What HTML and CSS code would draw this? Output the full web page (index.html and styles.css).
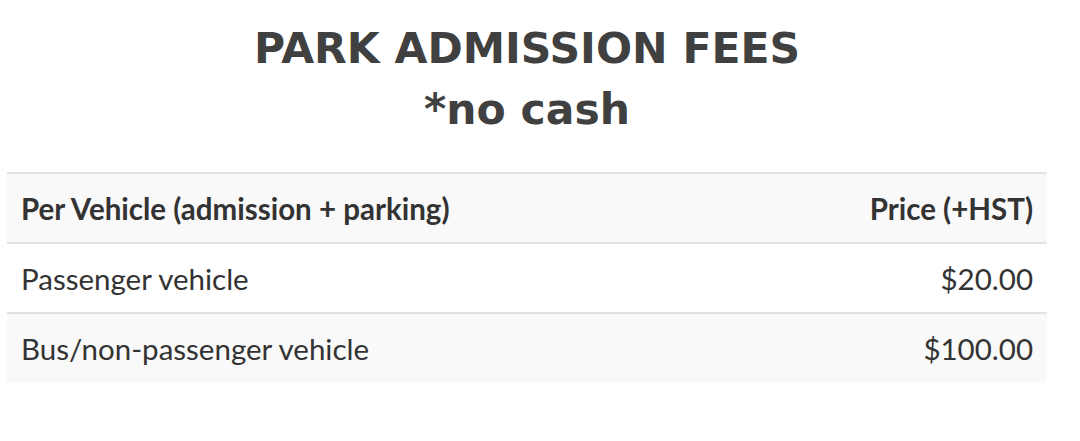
FILE: index.html
```html
<!DOCTYPE html>
<html>
<head>
<meta charset="utf-8">
<link rel="stylesheet" href="styles.css">
</head>
<body>
<div class="page">
  <h2 class="title">PARK ADMISSION FEES<br>*no cash</h2>
  <table class="fees">
    <thead>
      <tr><th>Per Vehicle (admission + parking)</th><th class="num">Price (+HST)</th></tr>
    </thead>
    <tbody>
      <tr><td>Passenger vehicle</td><td class="num">$20.00</td></tr>
      <tr class="alt"><td>Bus/non-passenger vehicle</td><td class="num">$100.00</td></tr>
    </tbody>
  </table>
</div>
</body>
</html>
```
FILE: styles.css
```css
html, body { margin: 0; padding: 0; background: #fff; }
.page { padding: 18px 33px 0 7px; }
.title {
  margin: 0 0 32px 0;
  text-align: center;
  font-family: "DejaVu Sans", sans-serif;
  font-weight: 700;
  font-size: 42.5px;
  line-height: 61px;
  color: #404040;
}
.fees {
  width: 100%;
  border-collapse: collapse;
  font-family: Lato, sans-serif;
  font-size: 29.5px;
  color: #333;
}
.fees th, .fees td {
  height: 70px;
  padding: 0 14px;
  text-align: left;
  border-top: 2px solid #e2e2e2;
  box-sizing: border-box;
}
.fees th { font-weight: 700; background: #f9f9f9; }
.fees tr.alt td { background: #f9f9f9; }
.fees .num { text-align: right; }
```
